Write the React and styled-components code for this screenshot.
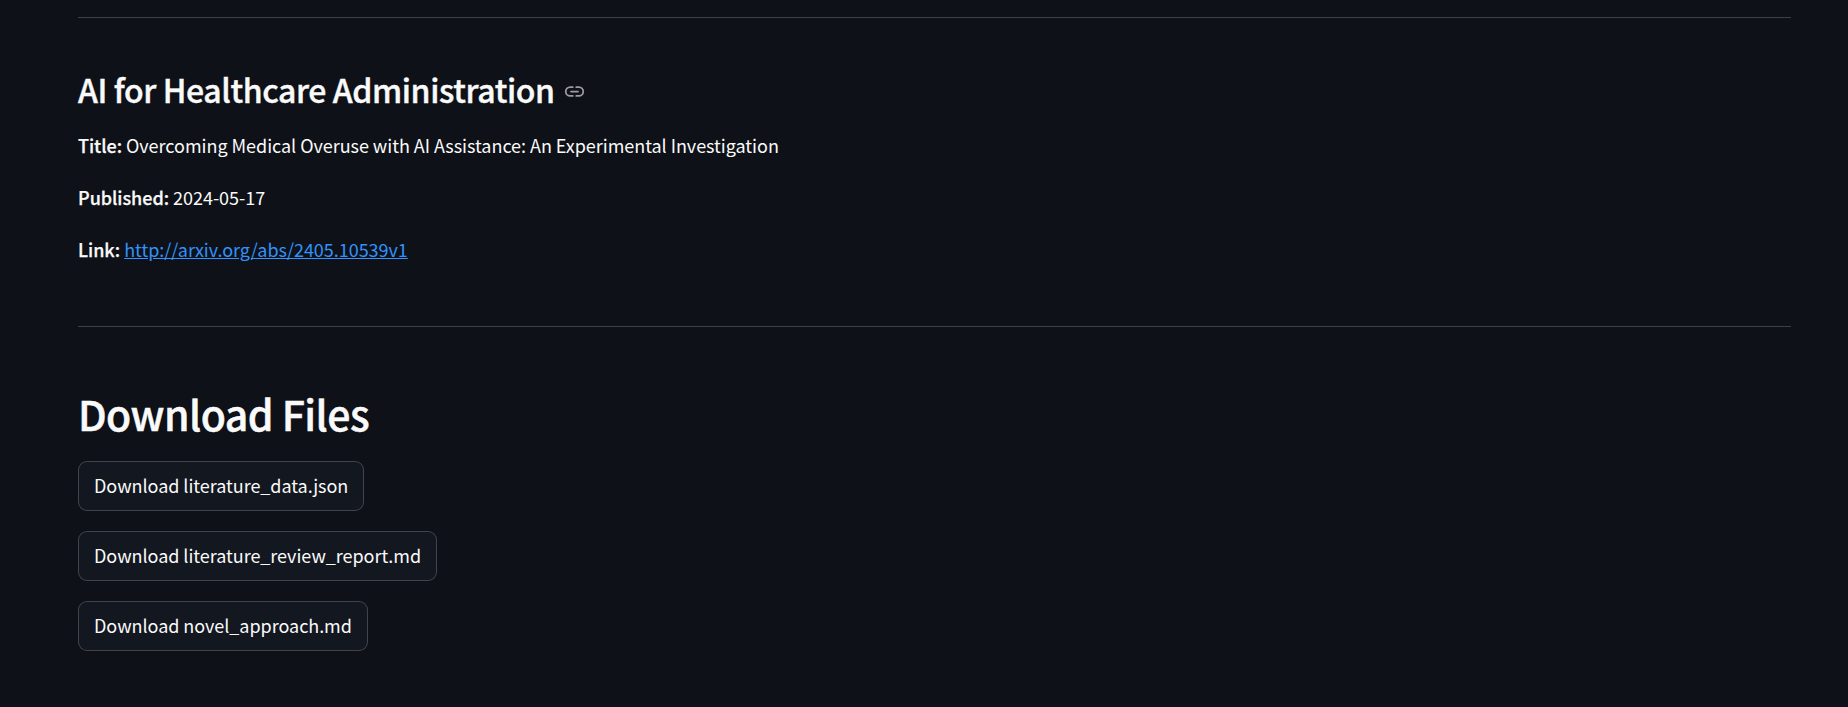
import styled, { createGlobalStyle } from 'styled-components'

const colors = {
    background: '#0e1117',
    text: '#fafafa',
    link: '#3291fa',
    rule: 'rgba(250,250,250,0.2)',
    buttonBackground: '#13171f',
}

const GlobalStyle = createGlobalStyle`
    html, body {
        margin: 0;
        height: 100%;
        background: ${colors.background};
    }

    body {
        color: ${colors.text};
        font-family: "Noto Sans CJK JP", "Noto Sans", sans-serif;
    }
`

const Page = styled.main`
    height: 707px;
    box-sizing: border-box;
    padding: 17px 57px 0 78px;
    overflow: hidden;
`

const Rule = styled.hr`
    margin: 0;
    border: 0;
    border-top: 1px solid ${colors.rule};
`

const Section = styled.section`
    height: 308px;
    display: flex;
    flex-direction: column;
`

const SectionTitle = styled.h3`
    display: flex;
    align-items: center;
    gap: 9px;
    margin: 49px 0 0;
    height: 44px;
    font-size: 32px;
    line-height: 44px;
    font-weight: 500;
    letter-spacing: -0.41px;
    -webkit-text-stroke: 0.4px currentColor;
`

const LinkIcon = styled.svg`
    width: 21px;
    height: 21px;
    margin-top: 4px;
    color: rgba(250,250,250,0.6);
`

const Field = styled.p`
    margin: 0;
    height: 52px;
    font-size: 18px;
    line-height: 52px;
    letter-spacing: -0.035px;

    &:first-of-type {
        margin-top: 8px;
    }

    strong {
        font-weight: 500;
        -webkit-text-stroke: 0.25px currentColor;
    }

    a {
        color: ${colors.link};
    }
`

const PageTitle = styled.h2`
    margin: 58px 0 0;
    height: 56px;
    font-size: 41px;
    line-height: 56px;
    font-weight: 500;
    letter-spacing: -0.55px;
    -webkit-text-stroke: 0.5px currentColor;
`

const Downloads = styled.div`
    display: flex;
    flex-direction: column;
    align-items: flex-start;
    gap: 20px;
    margin-top: 20px;
`

const DownloadButton = styled.button`
    height: 50px;
    padding: 0 15px 2px;
    box-sizing: border-box;
    border: 1px solid ${colors.rule};
    border-radius: 9px;
    background: ${colors.buttonBackground};
    color: ${colors.text};
    font: inherit;
    font-size: 18px;
    letter-spacing: -0.04px;
    cursor: pointer;
`

const files = ['literature_data.json', 'literature_review_report.md', 'novel_approach.md']

const App = () => (
    <Page>
        <GlobalStyle />
        <Rule />

        <Section>
            <SectionTitle>
                AI for Healthcare Administration
                <LinkIcon viewBox='0 0 24 24' fill='none' stroke='currentColor' strokeWidth='2' strokeLinecap='round'>
                    <path d='M10 7H7a5 5 0 0 0 0 10h3' />
                    <path d='M14 7h3a5 5 0 0 1 0 10h-3' />
                    <path d='M8 12h8' />
                </LinkIcon>
            </SectionTitle>

            <Field><strong>Title:</strong> Overcoming Medical Overuse with AI Assistance: An Experimental Investigation</Field>
            <Field><strong>Published:</strong> 2024-05-17</Field>
            <Field><strong>Link:</strong> <a href='http://arxiv.org/abs/2405.10539v1'>http://arxiv.org/abs/2405.10539v1</a></Field>
        </Section>

        <Rule />

        <PageTitle>Download Files</PageTitle>

        <Downloads>
            {files.map((file) => (
                <DownloadButton key={file}>Download {file}</DownloadButton>
            ))}
        </Downloads>
    </Page>
)

export default App
